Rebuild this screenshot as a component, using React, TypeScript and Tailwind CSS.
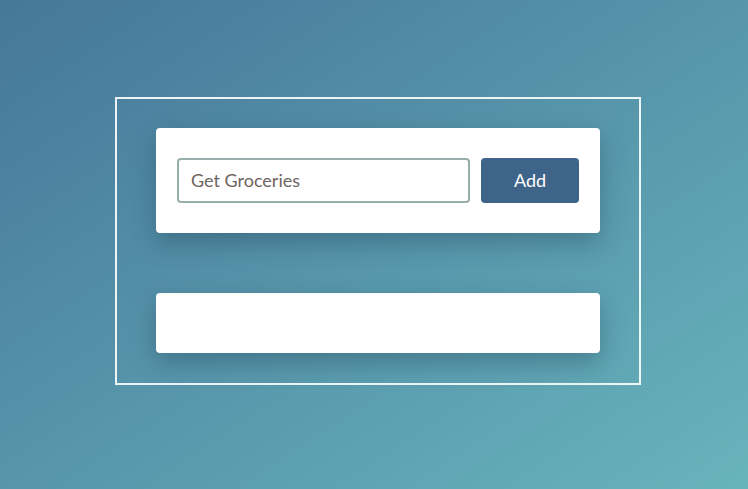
const App = () => {
  return (
    <div
      className="w-full min-h-screen flex items-center justify-center bg-gradient-to-br from-[#467799] to-[#68b4bc]"
      style={{ fontFamily: "Lato, 'Open Sans', sans-serif" }}
    >
      <div className="w-[526px] h-[288px] border-2 border-white/90 px-[39px] pt-[29px] -mt-[8px] ml-[8px] flex flex-col gap-[60px]">
        <div className="h-[105px] bg-white rounded-[4px] shadow-[0_10px_24px_rgba(30,60,80,0.35)] flex items-center px-[21px] gap-[11px]">
          <input
            type="text"
            placeholder="Get Groceries"
            className="w-[293px] h-[45px] border-2 border-[#97aeac] rounded-[4px] px-[12px] text-[18px] text-[#5f5a55] placeholder:text-[#6e6560] outline-none"
          />
          <button className="w-[98px] h-[45px] bg-[#3e6589] rounded-[4px] text-white text-[18px]">
            Add
          </button>
        </div>
        <div className="h-[60px] bg-white rounded-[4px] shadow-[0_10px_24px_rgba(30,60,80,0.35)]"></div>
      </div>
    </div>
  );
};

export default App;
